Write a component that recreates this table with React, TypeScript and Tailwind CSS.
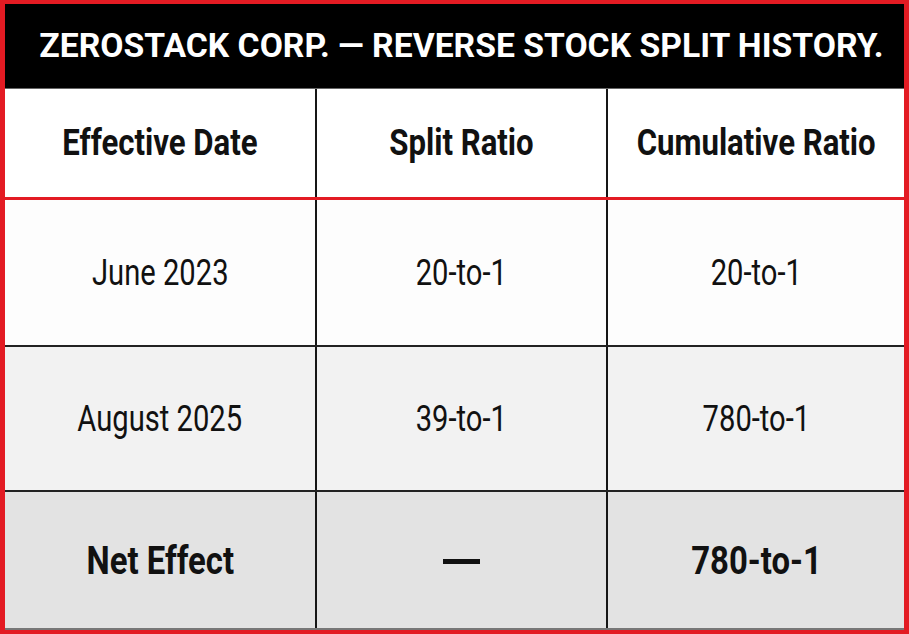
type Row = { date: string; split: string; cumulative: string; bg: string };

const rows: Row[] = [
  { date: 'June 2023', split: '20-to-1', cumulative: '20-to-1', bg: 'bg-[#fdfdfd]' },
  { date: 'August 2025', split: '39-to-1', cumulative: '780-to-1', bg: 'bg-[#f2f2f2]' },
];

// condensed look: Roboto squeezed horizontally
const Txt = ({ children, bold }: { children: React.ReactNode; bold?: boolean }) => (
  <span className={`inline-block whitespace-nowrap ${bold ? 'scale-x-[0.865]' : 'scale-x-[0.81]'}`}>{children}</span>
);

export default function App() {
  return (
    <div className="w-[909px] h-[634px] bg-[#e31b23] pt-[4px] px-[5px] pb-[4px] flex">
      <div className="flex-1 flex flex-col bg-white text-[#111] font-['Roboto',sans-serif]">
        {/* title bar */}
        <div className="h-[85px] shrink-0 bg-black flex items-center justify-center pl-[14px] border-b border-[#666]">
          <h1 className="font-bold text-[33.7px] text-white whitespace-nowrap">
            ZEROSTACK CORP. — REVERSE STOCK SPLIT HISTORY.
          </h1>
        </div>

        {/* column headings */}
        <div className="grid grid-cols-[310px_291px_1fr] h-[111px] shrink-0 bg-white font-bold text-[36px] border-b-[3px] border-[#e31b23]">
          <div className="flex items-center justify-center"><Txt bold>Effective Date</Txt></div>
          <div className="flex items-center justify-center border-l-2 border-[#161616]"><Txt bold>Split Ratio</Txt></div>
          <div className="flex items-center justify-center border-l-2 border-[#161616]"><Txt bold>Cumulative Ratio</Txt></div>
        </div>

        {rows.map((r, i) => (
          <div
            key={r.date}
            className={`grid grid-cols-[310px_291px_1fr] h-[145px] shrink-0 text-[36px] ${r.bg} ${i > 0 ? 'border-t-2 border-[#222]' : ''}`}
          >
            <div className="flex items-center justify-center"><Txt>{r.date}</Txt></div>
            <div className="flex items-center justify-center border-l-2 border-[#161616]"><Txt>{r.split}</Txt></div>
            <div className="flex items-center justify-center border-l-2 border-[#161616]"><Txt>{r.cumulative}</Txt></div>
          </div>
        ))}

        {/* totals */}
        <div className="flex-1 grid grid-cols-[310px_291px_1fr] bg-[#e3e3e3] font-bold text-[38px] border-t-2 border-[#222] border-b-[2px] border-b-[#777]">
          <div className="flex items-center justify-center pt-[2px]"><Txt bold>Net Effect</Txt></div>
          <div className="flex items-center justify-center pt-[2px] border-l-2 border-[#161616]">
            <span className="block w-[37px] h-[5px] bg-[#111]" />
          </div>
          <div className="flex items-center justify-center pt-[2px] border-l-2 border-[#161616]"><Txt bold>780-to-1</Txt></div>
        </div>
      </div>
    </div>
  );
}
